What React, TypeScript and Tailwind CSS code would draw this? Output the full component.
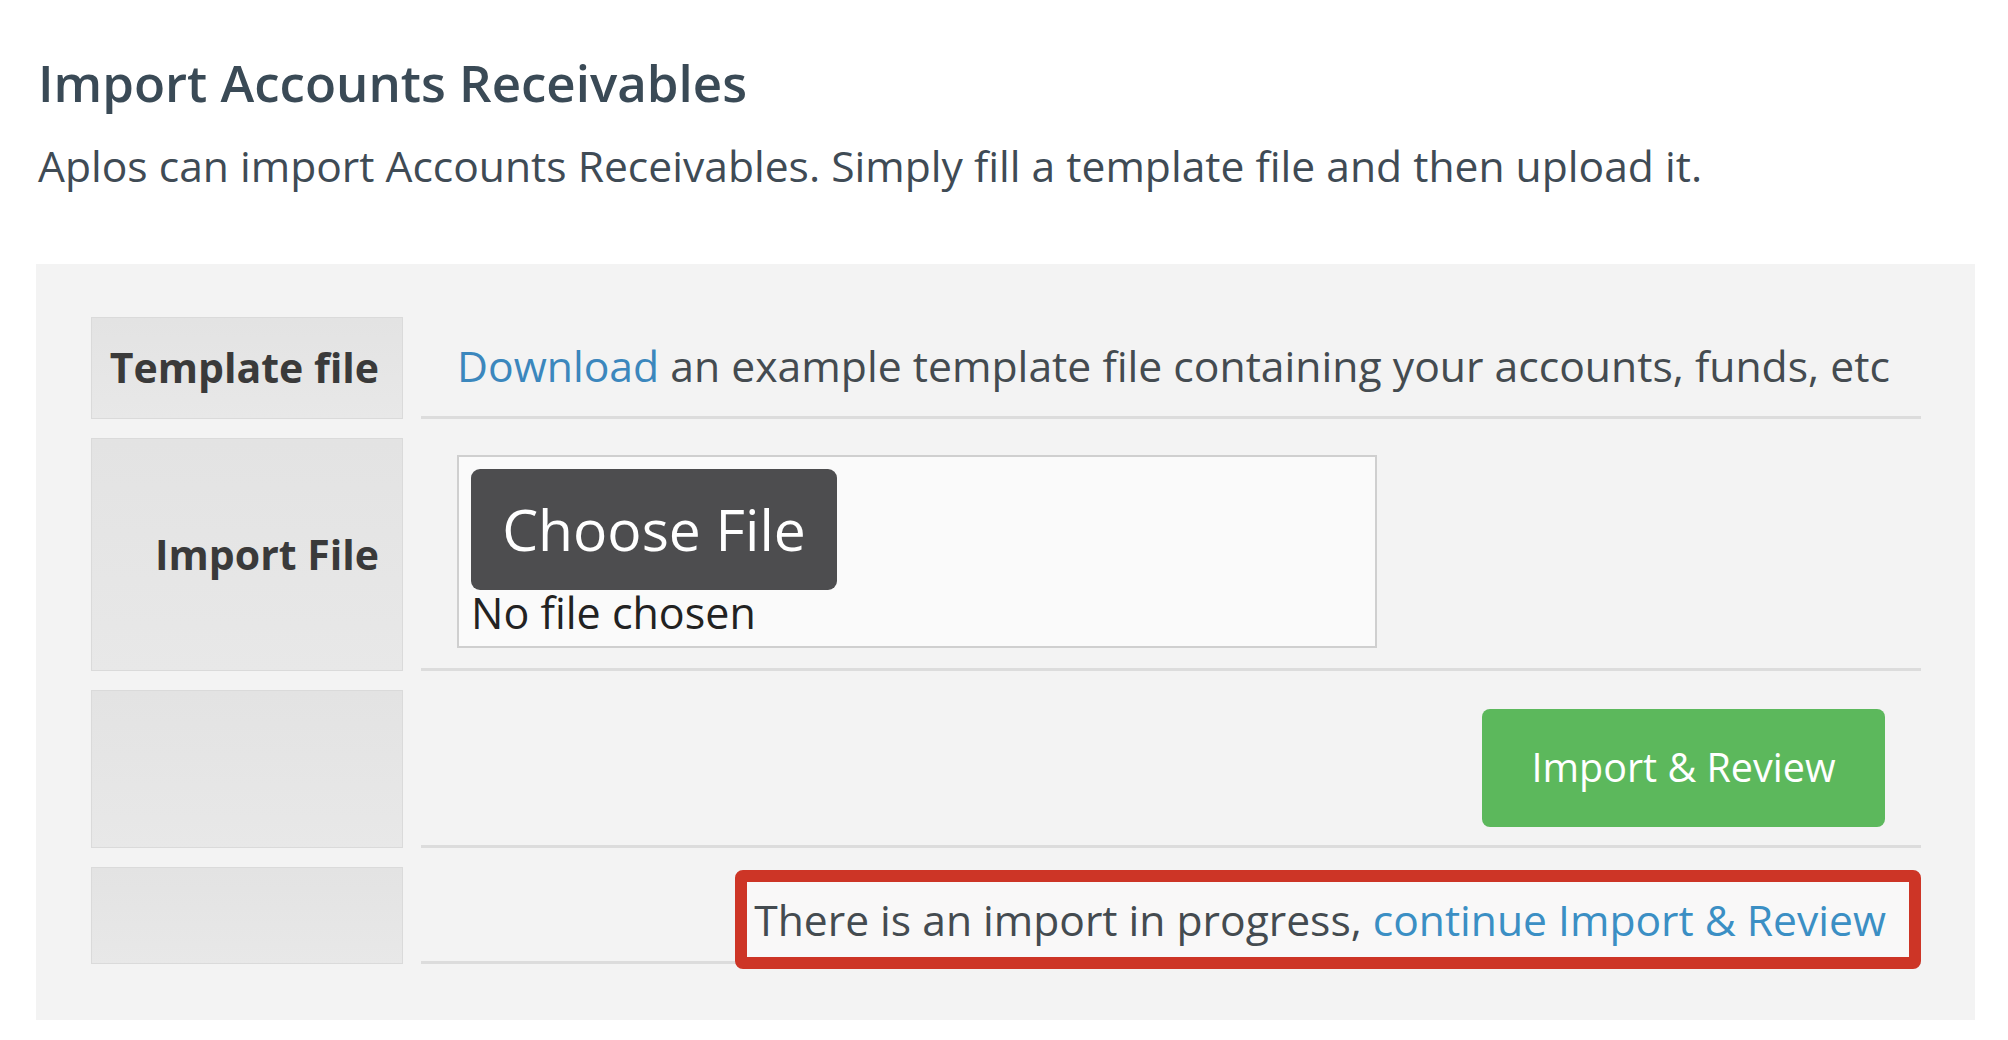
import React from 'react';

// Import form for accounts receivables, sized to the 2008px screenshot

const LabelCell: React.FC<{ children?: React.ReactNode; className?: string }> = ({ children, className = '' }) => (
  <div
    className={`w-[312px] shrink-0 flex items-center justify-end pr-[23px] bg-gradient-to-b from-[#e3e3e3] to-[#e8e8e8] border border-[#dadada] text-[41px] font-bold text-[#3a3a3a] ${className}`}
  >
    {children}
  </div>
);

export default function App() {
  return (
    <div className="min-h-screen bg-white pl-[36px] pr-[33px] pt-[52px] font-['Open_Sans',_'Noto_Sans',_sans-serif]">
      <header className="pl-[2px]">
        <h1 className="text-[51px] leading-[60px] font-semibold text-[#3a4a56]">
          Import Accounts Receivables
        </h1>
        <p className="mt-[28px] text-[42.6px] leading-[50px] text-[#3f4b55]">
          Aplos can import Accounts Receivables. Simply fill a template file and then upload it.
        </p>
      </header>

      <div className="mt-[74px] bg-[#f3f3f3] pl-[55px] pr-[54px] pt-[53px] pb-[56px] flex flex-col gap-[19px]">
        {/* template file */}
        <div className="flex h-[102px] gap-[18px]">
          <LabelCell>Template file</LabelCell>
          <div className="flex-1 flex items-center pl-[36px] border-b-[3px] border-[#dcdcdc] text-[42.7px] text-[#444b50] whitespace-nowrap">
            <a className="text-[#3b87bd]">Download</a>
            <span>&nbsp;an example template file containing your accounts, funds, etc</span>
          </div>
        </div>

        {/* import file */}
        <div className="flex h-[233px] gap-[18px]">
          <LabelCell>Import File</LabelCell>
          <div className="flex-1 pl-[36px] pt-[17px] border-b-[3px] border-[#dcdcdc]">
            <div className="w-[920px] h-[193px] bg-[#fafafa] border-2 border-[#cfcfcf] pl-[12px] pt-[12px]">
              <div className="w-[366px] h-[121px] rounded-[9px] bg-[#4d4d4f] flex items-center justify-center text-white text-[57px]">
                Choose File
              </div>
              <div className="text-[43px] leading-[46px] text-[#222222]">No file chosen</div>
            </div>
          </div>
        </div>

        {/* submit */}
        <div className="flex h-[158px] gap-[18px]">
          <LabelCell />
          <div className="flex-1 flex items-center justify-end pr-[36px] border-b-[3px] border-[#dcdcdc]">
            <button className="w-[403px] h-[118px] rounded-[8px] bg-[#5cb85c] text-white text-[39.5px]">
              Import &amp; Review
            </button>
          </div>
        </div>

        {/* in-progress notice */}
        <div className="flex h-[97px] gap-[18px]">
          <LabelCell />
          <div className="relative flex-1 border-b-[3px] border-[#dcdcdc]">
            <div className="absolute right-0 top-[3px] h-[99px] flex items-center pl-[7px] pr-[23px] border-[12px] border-[#cd3526] rounded-[8px] bg-[#f9f8f8] text-[42.6px] text-[#444b50] whitespace-nowrap">
              <span>There is an import in progress,&nbsp;</span>
              <a className="text-[#3b8fc4]">continue Import &amp; Review</a>
            </div>
          </div>
        </div>
      </div>
    </div>
  );
}
